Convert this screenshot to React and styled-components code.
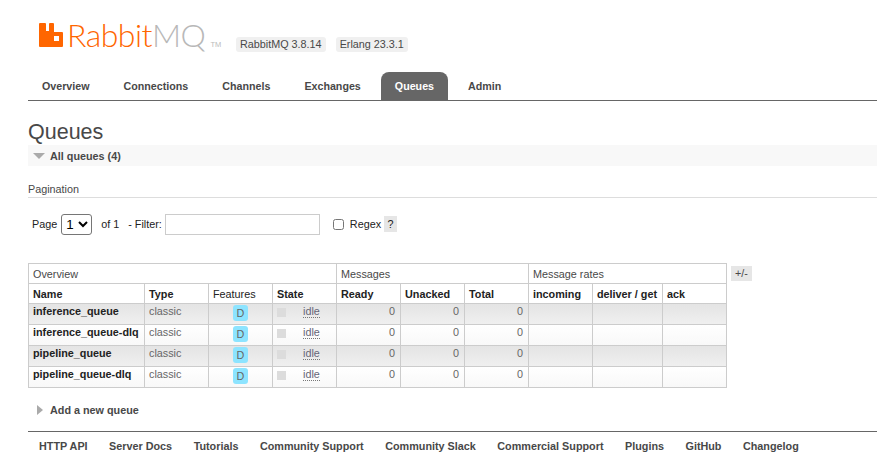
import React from "react"
import styled, { createGlobalStyle } from "styled-components"

const GlobalStyle = createGlobalStyle`
  html, body {
    margin: 0;
    padding: 0;
    background: #fff;
    color: #484848;
    font-family: "Liberation Sans", Arial, sans-serif;
    font-size: 10.8px;
  }
`

const Page = styled.div`
  width: 877px;
  height: 473px;
  overflow: hidden;
  padding-left: 28px;
  box-sizing: border-box;
`

const Header = styled.div`
  display: flex;
  align-items: flex-start;
  height: 72px;
  padding-left: 11px;
  box-sizing: border-box;
`

const Logo = styled.div`
  display: flex;
  align-items: flex-start;
  padding-top: 23px;
  width: 197px;
  svg {
    display: block;
    flex: none;
  }
`

const LogoText = styled.span`
  font-family: "Lato", "Liberation Sans", sans-serif;
  font-weight: 300;
  font-size: 32px;
  line-height: 23px;
  letter-spacing: -0.5px;
  color: #ff6600;
  margin-left: 3px;
  em {
    font-style: normal;
    color: #b8b8b8;
  }
`

const Trademark = styled.span`
  font-family: "Liberation Sans", sans-serif;
  font-size: 7.5px;
  line-height: 9px;
  color: #bbb;
  margin-left: 5px;
  margin-top: 17px;
`

const Versions = styled.div`
  display: flex;
  gap: 10px;
  padding-top: 37px;
`

const Version = styled.span`
  background: #f0f0f0;
  border-radius: 3px;
  padding: 2px 4px;
  line-height: 11px;
  height: 11px;
`

const Tabs = styled.ul`
  display: flex;
  margin: 0;
  padding: 0;
  list-style: none;
  width: 849px;
  height: 28px;
  border-bottom: 1px solid #666;
`

const Tab = styled.li`
  height: 28px;
  line-height: 28px;
  padding: 0 14px;
  margin-right: ${p => p.$gap}px;
  font-size: 10.7px;
  font-weight: bold;
  border-radius: ${p => (p.$active ? "8px 8px 0 0" : "0")};
  background: ${p => (p.$active ? "#666" : "transparent")};
  color: ${p => (p.$active ? "#fff" : "#484848")};
`

const Title = styled.h1`
  margin: 19px 0 0;
  font-weight: normal;
  font-size: 21.5px;
  line-height: 25px;
  color: #484848;
`

const SectionHeader = styled.div`
  display: flex;
  align-items: center;
  gap: ${p => p.$gap}px;
  height: 21px;
  padding-left: ${p => p.$indent}px;
  margin-top: ${p => p.$top}px;
  background: ${p => p.$bg || "transparent"};
  font-weight: bold;
  color: #484848;
`

const ArrowDown = styled.span`
  width: 0;
  height: 0;
  border-left: 6px solid transparent;
  border-right: 6px solid transparent;
  border-top: 6px solid #aaa;
`

const ArrowRight = styled.span`
  width: 0;
  height: 0;
  border-top: 5px solid transparent;
  border-bottom: 5px solid transparent;
  border-left: 6px solid #aaa;
`

const SubHeading = styled.div`
  margin-top: 16px;
  height: 15px;
  line-height: 14px;
  color: #484848;
  border-bottom: 1px solid #ddd;
`

const FilterRow = styled.div`
  display: flex;
  align-items: center;
  height: 24px;
  margin-top: 14px;
  padding-left: 4px;
  color: #222;
`

const PageSelect = styled.select`
  width: 31px;
  height: 21px;
  margin: 0 9px 0 4px;
  padding: 0;
  font-family: "Liberation Sans", sans-serif;
  font-size: 13.33px;
  background: #fff;
  border: 1px solid #767676;
  border-radius: 3px;
  color: #000;
`

const FilterInput = styled.input`
  width: 153px;
  height: 19px;
  padding: 0;
  margin-left: 3px;
  box-sizing: content-box;
  background: #fff;
  border: 1px solid #ccc;
`

const RegexCheck = styled.input`
  width: 11px;
  height: 11px;
  margin: 0 6px 0 13px;
  accent-color: #666;
`

const HelpMark = styled.span`
  background: #e6e6e6;
  padding: 0 3.5px;
  margin-left: 3px;
  line-height: 16px;
`

const TableRow = styled.div`
  display: flex;
  align-items: flex-start;
  margin-top: 27px;
`

const QueueTable = styled.table`
  border-collapse: collapse;
  table-layout: fixed;
  width: 699px;
  font-size: 10.8px;
  color: #484848;
`

const GroupCell = styled.th`
  box-sizing: border-box;
  height: 20px;
  padding: 0 4px;
  font-weight: normal;
  text-align: left;
  border: 1px solid #ccc;
`

const HeadCell = styled.th`
  box-sizing: border-box;
  height: 20px;
  padding: 0 4px;
  white-space: nowrap;
  font-weight: ${p => (p.$plain ? "normal" : "bold")};
  text-align: left;
  color: #222;
  border: 1px solid #ccc;
`

const Row = styled.tr`
  background: ${p =>
    p.$odd
      ? "linear-gradient(#e4e4e4, #f0f0f0)"
      : "linear-gradient(#fff, #f8f8f8)"};
`

const Cell = styled.td`
  box-sizing: border-box;
  height: 21px;
  padding: 0 ${p => (p.$num ? 5 : 4)}px 6px 4px;
  border: 1px solid #ccc;
  vertical-align: middle;
  white-space: nowrap;
  text-align: ${p => (p.$num ? "right" : "left")};
  color: ${p => (p.$name ? "#222" : "#666")};
  font-weight: ${p => (p.$name ? "bold" : "normal")};
  overflow: hidden;
`

const FeatureCell = styled(Cell)`
  padding: 1px 0 0;
  text-align: center;
  vertical-align: top;
`

const Badge = styled.span`
  display: block;
  width: 15px;
  height: 16px;
  line-height: 17px;
  margin: 0 auto;
  background: #8de4ff;
  border-radius: 3px;
  color: #666;
  text-align: center;
`

const StateCell = styled(Cell)`
  padding: 0 4px 2px;
`

const StateInner = styled.div`
  display: flex;
  align-items: center;
`

const StateBox = styled.span`
  width: 9px;
  height: 9px;
  background: #dcdcdc;
  margin: 0 17px 2px 0;
`

const Idle = styled.span`
  color: #667;
  border-bottom: 1px dotted #777;
  line-height: 11px;
  margin-bottom: 3px;
`

const ToggleColumns = styled.span`
  background: #e6e6e6;
  margin-left: 4px;
  margin-top: 3px;
  padding: 0 4px;
  line-height: 15px;
  color: #484848;
`

const Footer = styled.ul`
  display: flex;
  margin: 11px 0 0;
  padding: 7px 0 0 11px;
  list-style: none;
  width: 849px;
  box-sizing: border-box;
  border-top: 1px solid #666;
`

const FooterLink = styled.li`
  font-weight: bold;
  line-height: 15px;
  margin-right: 21.5px;
  color: #484848;
`

const tabs = [
  ["Overview", 6],
  ["Connections", 6],
  ["Channels", 6],
  ["Exchanges", 6],
  ["Queues", 6],
  ["Admin", 0],
]

const queues = [
  "inference_queue",
  "inference_queue-dlq",
  "pipeline_queue",
  "pipeline_queue-dlq",
]

const columnWidths = [116, 64, 64, 64, 64, 64, 64, 64, 70, 64]

const footerLinks = [
  "HTTP API",
  "Server Docs",
  "Tutorials",
  "Community Support",
  "Community Slack",
  "Commercial Support",
  "Plugins",
  "GitHub",
  "Changelog",
]

const RabbitMark = () => (
  <svg width="25" height="24" viewBox="0 0 25 24">
    <path
      fill="#ff6600"
      fillRule="evenodd"
      d="M1 0h5a1 1 0 0 1 1 1v7h3V1a1 1 0 0 1 1-1h3a1 1 0 0 1 1 1v8h8a1 1 0 0 1 1 1v13a1 1 0 0 1-1 1H1a1 1 0 0 1-1-1V1a1 1 0 0 1 1-1zM15 13h5v5h-5z"
    />
  </svg>
)

export default function App() {
  return (
    <Page>
      <GlobalStyle />
      <Header>
        <Logo>
          <RabbitMark />
          <LogoText>
            Rabbit<em>MQ</em>
          </LogoText>
          <Trademark>TM</Trademark>
        </Logo>
        <Versions>
          <Version>RabbitMQ 3.8.14</Version>
          <Version>Erlang 23.3.1</Version>
        </Versions>
      </Header>
      <Tabs>
        {tabs.map(([name, gap]) => (
          <Tab key={name} $gap={gap} $active={name === "Queues"}>
            {name}
          </Tab>
        ))}
      </Tabs>
      <Title>Queues</Title>
      <SectionHeader $bg="#f8f8f8" $indent={5} $gap={5} $top={0}>
        <ArrowDown />
        All queues (4)
      </SectionHeader>
      <SubHeading>Pagination</SubHeading>
      <FilterRow>
        Page
        <PageSelect defaultValue="1">
          <option>1</option>
        </PageSelect>
        of 1 &nbsp; - Filter:
        <FilterInput />
        <RegexCheck type="checkbox" />
        Regex
        <HelpMark>?</HelpMark>
      </FilterRow>
      <TableRow>
        <QueueTable>
          <colgroup>
            {columnWidths.map((w, i) => (
              <col key={i} width={w} />
            ))}
          </colgroup>
          <thead>
            <tr>
              <GroupCell colSpan={4}>Overview</GroupCell>
              <GroupCell colSpan={3}>Messages</GroupCell>
              <GroupCell colSpan={3}>Message rates</GroupCell>
            </tr>
            <tr>
              <HeadCell>Name</HeadCell>
              <HeadCell>Type</HeadCell>
              <HeadCell $plain>Features</HeadCell>
              <HeadCell>State</HeadCell>
              <HeadCell>Ready</HeadCell>
              <HeadCell>Unacked</HeadCell>
              <HeadCell>Total</HeadCell>
              <HeadCell>incoming</HeadCell>
              <HeadCell>deliver / get</HeadCell>
              <HeadCell>ack</HeadCell>
            </tr>
          </thead>
          <tbody>
            {queues.map((name, i) => (
              <Row key={name} $odd={i % 2 === 0}>
                <Cell $name>{name}</Cell>
                <Cell>classic</Cell>
                <FeatureCell>
                  <Badge>D</Badge>
                </FeatureCell>
                <StateCell>
                  <StateInner>
                    <StateBox />
                    <Idle>idle</Idle>
                  </StateInner>
                </StateCell>
                <Cell $num>0</Cell>
                <Cell $num>0</Cell>
                <Cell $num>0</Cell>
                <Cell />
                <Cell />
                <Cell />
              </Row>
            ))}
          </tbody>
        </QueueTable>
        <ToggleColumns>+/-</ToggleColumns>
      </TableRow>
      <SectionHeader $indent={9} $gap={7} $top={11}>
        <ArrowRight />
        Add a new queue
      </SectionHeader>
      <Footer>
        {footerLinks.map(link => (
          <FooterLink key={link}>{link}</FooterLink>
        ))}
      </Footer>
    </Page>
  )
}
